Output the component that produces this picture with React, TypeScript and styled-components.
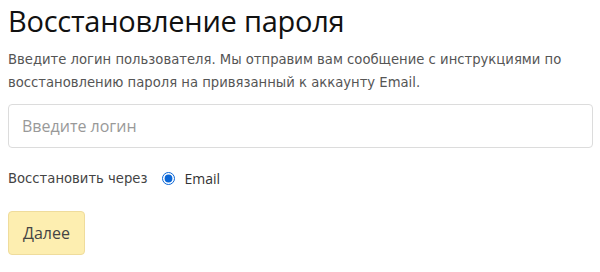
import React, { useState } from "react";
import styled, { createGlobalStyle } from "styled-components";

const GlobalStyle = createGlobalStyle`
  html, body {
    margin: 0;
    padding: 0;
    background: #fff;
  }
`;

const Page = styled.div`
  width: 600px;
  height: 272px;
  box-sizing: border-box;
  padding: 0 7px 0 8px;
  display: flex;
  flex-direction: column;
  font-family: "DejaVu Sans", sans-serif;
`;

const Title = styled.h1`
  margin: 1px 0 0;
  font-family: "Open Sans", sans-serif;
  font-weight: 400;
  font-size: 29px;
  line-height: 40px;
  color: #111;
  letter-spacing: -0.25px;
`;

const Lead = styled.p`
  margin: 7px 0 0;
  font-size: 13.2px;
  line-height: 23px;
  color: #555;
`;

const LoginInput = styled.input`
  margin-top: 10px;
  height: 44px;
  box-sizing: border-box;
  width: 100%;
  border: 1px solid #dcdcdc;
  border-radius: 4px;
  padding: 0 13px;
  font-family: "Open Sans", sans-serif;
  font-size: 16px;
  color: #333;
  outline: none;
  &::placeholder {
    color: #999;
  }
`;

const MethodRow = styled.div`
  margin-top: 21px;
  display: flex;
  align-items: center;
  gap: 15px;
  font-size: 13.2px;
  color: #444;
`;

const RadioLabel = styled.label`
  display: flex;
  align-items: center;
  gap: 9px;
  font-family: "Open Sans", sans-serif;
  font-size: 14px;
  color: #333;
`;

const Radio = styled.input`
  margin: 0;
  width: 13px;
  height: 13px;
  accent-color: #0a66d6;
`;

const NextButton = styled.button`
  margin-top: 23px;
  align-self: flex-start;
  width: 77px;
  height: 44px;
  border: 1px solid #efdc9c;
  border-radius: 4px;
  background: #fdeeb0;
  color: #444;
  font-family: "Open Sans", sans-serif;
  font-size: 16px;
  cursor: pointer;
`;

export default function App() {
  const [login, setLogin] = useState("");
  return (
    <Page>
      <GlobalStyle />
      <Title>Восстановление пароля</Title>
      <Lead>
        Введите логин пользователя. Мы отправим вам сообщение с инструкциями по
        восстановлению пароля на привязанный к аккаунту Email.
      </Lead>
      <LoginInput
        placeholder="Введите логин"
        value={login}
        onChange={(e) => setLogin(e.target.value)}
      />
      <MethodRow>
        Восстановить через
        <RadioLabel>
          <Radio type="radio" name="method" defaultChecked />
          Email
        </RadioLabel>
      </MethodRow>
      <NextButton>Далее</NextButton>
    </Page>
  );
}
